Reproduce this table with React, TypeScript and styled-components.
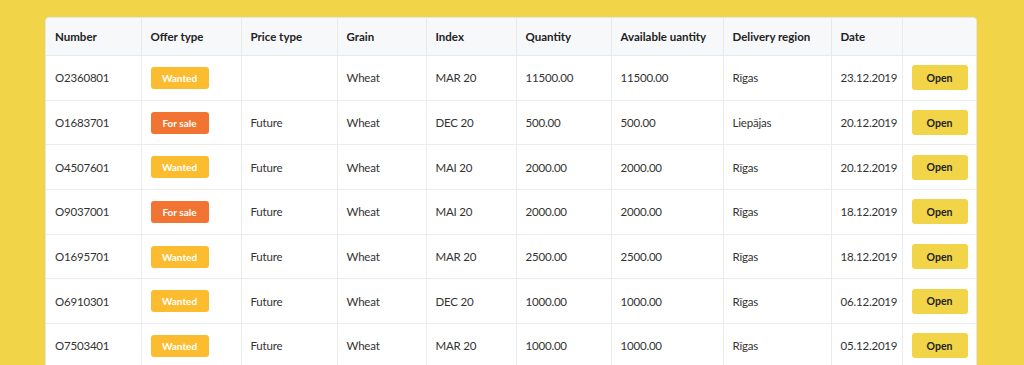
import styled, { createGlobalStyle } from 'styled-components';

const GlobalStyle = createGlobalStyle`
  html, body {
    margin: 0;
    padding: 0;
    background: #f1d447;
    font-family: Lato, 'Open Sans', sans-serif;
  }
`;

type Offer = 'Wanted' | 'For sale';

const rows: {
  number: string;
  offer: Offer;
  price: string;
  index: string;
  qty: string;
  region: string;
  date: string;
}[] = [
  { number: 'O2360801', offer: 'Wanted', price: '', index: 'MAR 20', qty: '11500.00', region: 'Rīgas', date: '23.12.2019' },
  { number: 'O1683701', offer: 'For sale', price: 'Future', index: 'DEC 20', qty: '500.00', region: 'Liepājas', date: '20.12.2019' },
  { number: 'O4507601', offer: 'Wanted', price: 'Future', index: 'MAI 20', qty: '2000.00', region: 'Rīgas', date: '20.12.2019' },
  { number: 'O9037001', offer: 'For sale', price: 'Future', index: 'MAI 20', qty: '2000.00', region: 'Rīgas', date: '18.12.2019' },
  { number: 'O1695701', offer: 'Wanted', price: 'Future', index: 'MAR 20', qty: '2500.00', region: 'Rīgas', date: '18.12.2019' },
  { number: 'O6910301', offer: 'Wanted', price: 'Future', index: 'DEC 20', qty: '1000.00', region: 'Rīgas', date: '06.12.2019' },
  { number: 'O7503401', offer: 'Wanted', price: 'Future', index: 'MAR 20', qty: '1000.00', region: 'Rīgas', date: '05.12.2019' },
];

const columns = [
  { title: 'Number', width: 95 },
  { title: 'Offer type', width: 100 },
  { title: 'Price type', width: 96 },
  { title: 'Grain', width: 89 },
  { title: 'Index', width: 90 },
  { title: 'Quantity', width: 95 },
  { title: 'Available uantity', width: 112 },
  { title: 'Delivery region', width: 108 },
  { title: 'Date', width: 71 },
  { title: '', width: 75 },
];

export default function App() {
  return (
    <>
      <GlobalStyle />
      <Page>
        <Card>
          <Table>
            <colgroup>
              {columns.map((c, i) => (
                <col key={i} style={{ width: c.width }} />
              ))}
            </colgroup>
            <thead>
              <tr>
                {columns.map((c, i) => (
                  <Th key={i}>{c.title}</Th>
                ))}
              </tr>
            </thead>
            <tbody>
              {rows.map(r => (
                <Tr key={r.number}>
                  <Td>{r.number}</Td>
                  <Td>
                    <Badge $kind={r.offer}>{r.offer}</Badge>
                  </Td>
                  <Td>{r.price}</Td>
                  <Td>Wheat</Td>
                  <Td>{r.index}</Td>
                  <Td>{r.qty}</Td>
                  <Td>{r.qty}</Td>
                  <Td>{r.region}</Td>
                  <Td>{r.date}</Td>
                  <Td>
                    <OpenButton>Open</OpenButton>
                  </Td>
                </Tr>
              ))}
            </tbody>
          </Table>
        </Card>
      </Page>
    </>
  );
}

const Page = styled.div`
  padding: 17px 47px 0 45px;
`;

const Card = styled.div`
  width: 932px;
  background: #fff;
  border-radius: 4px 4px 0 0;
  overflow: hidden;
  border: 1px solid #e6e6e6;
  box-sizing: border-box;
`;

const Table = styled.table`
  width: 100%;
  border-collapse: collapse;
  table-layout: fixed;
`;

const Th = styled.th`
  height: 37px;
  padding: 0 9px;
  background: #f7f8fa;
  text-align: left;
  font-size: 11.5px;
  font-weight: 700;
  color: #222;
  border-left: 1px solid #e9e9e9;
  border-bottom: 1px solid #e9e9e9;
  white-space: nowrap;
  &:first-child {
    border-left: none;
  }
`;

const Tr = styled.tr`
  height: 44.7px;
`;

const Td = styled.td`
  padding: 0 9px;
  font-size: 11.5px;
  letter-spacing: -0.2px;
  color: #333;
  border-left: 1px solid #ececec;
  border-bottom: 1px solid #ececec;
  white-space: nowrap;
  &:first-child {
    border-left: none;
  }
`;

const Badge = styled.span<{ $kind: Offer }>`
  display: inline-flex;
  align-items: center;
  justify-content: center;
  width: 58px;
  height: 22px;
  border-radius: 3px;
  background: ${p => (p.$kind === 'Wanted' ? '#fbbd2f' : '#f27432')};
  color: #fff;
  font-size: 10px;
  font-weight: 700;
  letter-spacing: 0;
`;

const OpenButton = styled.button`
  display: flex;
  align-items: center;
  justify-content: center;
  width: 56px;
  height: 25px;
  border: none;
  border-radius: 3px;
  background: #f1d447;
  color: #222;
  font-family: inherit;
  font-size: 10.5px;
  font-weight: 700;
  letter-spacing: 0;
  padding: 0;
`;
